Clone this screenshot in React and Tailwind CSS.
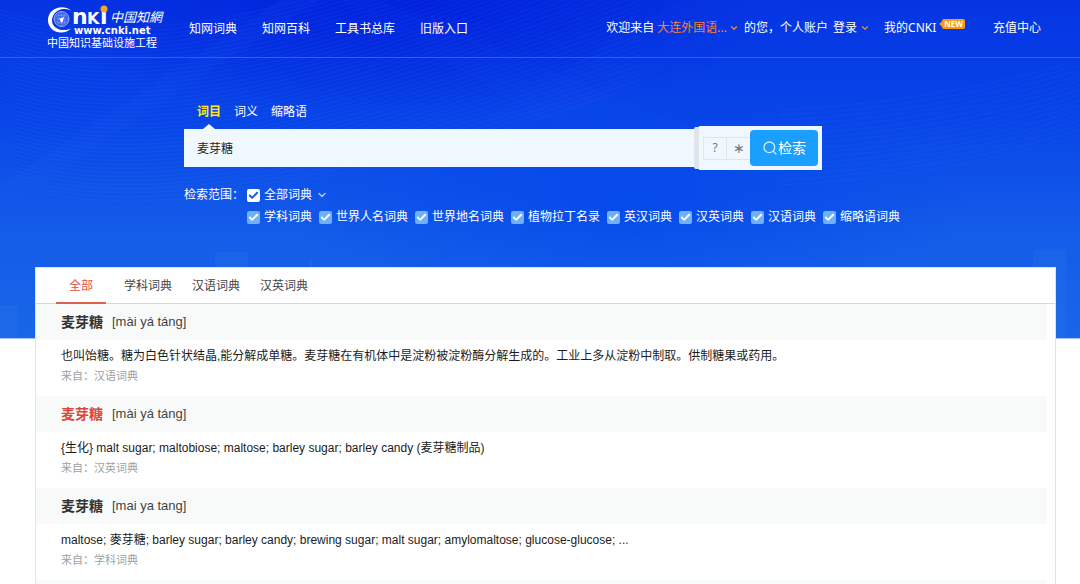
import { useState } from 'react';
import { Check, ChevronDown, Search } from 'lucide-react';

const NAV = ['知网词典', '知网百科', '工具书总库', '旧版入口'];

const SEARCH_TABS = ['词目', '词义', '缩略语'];

const DICTS = [
  '学科词典',
  '世界人名词典',
  '世界地名词典',
  '植物拉丁名录',
  '英汉词典',
  '汉英词典',
  '汉语词典',
  '缩略语词典',
];

const RESULT_TABS = ['学科词典', '汉语词典', '汉英词典'];

const ENTRIES = [
  {
    id: 1,
    word: '麦芽糖',
    pinyin: '[mài yá táng]',
    text: '也叫饴糖。糖为白色针状结晶,能分解成单糖。麦芽糖在有机体中是淀粉被淀粉酶分解生成的。工业上多从淀粉中制取。供制糖果或药用。',
    source: '汉语词典',
  },
  {
    id: 2,
    word: '麦芽糖',
    pinyin: '[mài yá táng]',
    text: '{生化} malt sugar; maltobiose; maltose; barley sugar; barley candy (麦芽糖制品)',
    source: '汉英词典',
    active: true,
  },
  {
    id: 3,
    word: '麦芽糖',
    pinyin: '[mai ya tang]',
    text: 'maltose; 麥芽糖; barley sugar; barley candy; brewing sugar; malt sugar; amylomaltose; glucose-glucose; ...',
    source: '学科词典',
  },
];

const WAVES = Array.from({ length: 44 }, (_, i) => i);

function Logo() {
  return (
    <svg width="120" height="48" viewBox="0 0 120 48" role="img" aria-label="CNKI 中国知网">
      {/* Globe inside the C */}
      <path
        d="M25 5.500C18-.5 6.500 2 3 10c-3.500 8 2 17.500 12 17.500 4 0 7.500-1.500 10-4-8 3.500-16 1-18.500-5C4 11 11 3 19 4c2.500.2 4 .8 6 1.500z"
        fill="#fff"
      />
      <circle cx="15.500" cy="14" r="7.500" fill="#2f58e6" stroke="#a9bdfa" strokeWidth=".8" />
      <g fill="none" stroke="#8fa8f8" strokeWidth=".5">
        <ellipse cx="15.500" cy="14" rx="3.500" ry="7.500" />
        <ellipse cx="15.500" cy="14" rx="7.500" ry="3.500" />
        <path d="M9.500 10h12M9.500 18h12M15.500 6.500v15M8 14h15" />
      </g>
      <path d="M13 12.500l2 1 3-2-1 5-2 1z" fill="#fff" />
      <g fill="#fff" fontFamily="DejaVu Sans, sans-serif" fontWeight="700">
        <text x="26" y="19" fontSize="22">n</text>
        <text x="41" y="19" fontSize="16">K</text>
        <text x="54" y="19" fontSize="22">i</text>
        <text x="28" y="29" fontSize="10">www.cnki.net</text>
      </g>
      <circle cx="58" cy="4" r="3.500" fill="#f5a623" />
      <g fill="#fff" fontFamily="Noto Sans CJK SC, sans-serif">
        <text x="64" y="17" fontSize="13" fontStyle="italic">中国知網</text>
        <text x="1" y="42" fontSize="11">中国知识基础设施工程</text>
      </g>
    </svg>
  );
}

function HeroBackdrop() {
  return (
    <svg
      className="absolute inset-0 h-full w-full"
      viewBox="0 0 1080 338"
      preserveAspectRatio="none"
      aria-hidden="true"
    >
      <defs>
        <linearGradient id="sky" x1="0" y1="0" x2="0" y2="1">
          <stop offset="0" stopColor="#0534e2" />
          <stop offset=".35" stopColor="#0845e8" />
          <stop offset=".7" stopColor="#145de8" />
          <stop offset="1" stopColor="#1866e8" />
        </linearGradient>
        <radialGradient id="deep" cx=".58" cy=".6" r=".32">
          <stop offset="0" stopColor="#0045ec" stopOpacity=".7" />
          <stop offset="1" stopColor="#0045ec" stopOpacity="0" />
        </radialGradient>
        <radialGradient id="dusk" cx=".38" cy="0" r=".35">
          <stop offset="0" stopColor="#001fdc" stopOpacity=".9" />
          <stop offset="1" stopColor="#001fdc" stopOpacity="0" />
        </radialGradient>
      </defs>
      <rect width="1080" height="338" fill="url(#sky)" />
      <rect width="1080" height="338" fill="url(#deep)" />
      <rect width="1080" height="338" fill="url(#dusk)" />
      <g fill="none" stroke="#3c7bff" strokeOpacity=".11">
        {WAVES.map(i => (
          <path key={i} d={`M0 ${i * 4 + 10}C120 ${i * 4 + 50} 300 ${i * 4 + 30} 640 ${i * 5 - 130}`} />
        ))}
        {WAVES.slice(0, 16).map(i => (
          <path key={i} d={`M780 ${110 + i * 5}C880 ${105 + i * 5} 980 ${90 + i * 5} 1080 ${60 + i * 5}`} />
        ))}
      </g>
      <path d="M0 185L280 0h40L120 130 0 215z" fill="#2a6bff" fillOpacity=".07" />
      <path d="M380 0L700 130H560L340 0z" fill="#2a6bff" fillOpacity=".05" />
      <path d="M480 120L680 0h120L560 120z" fill="#2a6bff" fillOpacity=".05" />
      {/* Skyline */}
      <g fill="#3f8cf0" fillOpacity=".12">
        <path d="M0 305h18v33H0zM215 252h33v30h-33zM310 260h2v22h-2zM1033 250h33v88h-33z" />
      </g>
    </svg>
  );
}

function CheckItem({ label, primary, checked, onChange }) {
  return (
    <label className="flex items-center gap-1 whitespace-nowrap">
      <span className="relative flex">
        <input
          type="checkbox"
          checked={checked}
          onChange={onChange}
          className={`h-[13px] w-[13px] appearance-none rounded-xs ${primary ? 'bg-white' : 'bg-[#6fb0fb]'}`}
        />
        {checked && (
          <Check
            size={11}
            strokeWidth={4}
            className={`pointer-events-none absolute top-px left-px ${primary ? 'text-[#1c55e0]' : 'text-white'}`}
          />
        )}
      </span>
      {label}
    </label>
  );
}

function Entry({ entry }) {
  return (
    <article>
      <div className="mr-2 flex h-9 items-center gap-[9px] bg-[#f8faf9] pl-[25px]">
        <h2 className={`text-sm font-bold ${entry.active ? 'text-[#d9483b]' : 'text-[#333]'}`}>{entry.word}</h2>
        <span className="text-[13px] text-[#444]">{entry.pinyin}</span>
      </div>
      <div className="pt-[6px] pr-8 pb-[10px] pl-[25px]">
        <p className="text-xs leading-5 text-[#1c1c1c]">{entry.text}</p>
        <p className="text-[11px] leading-5 text-[#a0a0a0]">来自：{entry.source}</p>
      </div>
    </article>
  );
}

export default function App() {
  const [query, setQuery]         = useState('麦芽糖');
  const [searchTab, setSearchTab] = useState('词目');
  const [selected, setSelected]   = useState(DICTS);

  const allSelected = selected.length === DICTS.length;

  function toggle(name) {
    setSelected(list => (list.includes(name) ? list.filter(n => n !== name) : [...list, name]));
  }

  return (
    <div className="flex min-h-screen flex-col bg-white font-['Liberation_Sans','Noto_Sans_CJK_SC',sans-serif] text-xs">
      <div className="relative border-b border-[#a9c4f5] pb-[110px] font-['Noto_Sans','Noto_Sans_CJK_SC',sans-serif] text-white">
        <HeroBackdrop />

        {/* Header */}
        <header className="relative flex h-[58px] items-center justify-between border-b border-[#2f62f2] pr-[39px] pl-[46px] whitespace-nowrap">
          <div className="flex items-center gap-[23px]">
            <a href="#home">
              <Logo />
            </a>
            <nav className="flex gap-[25px]">
              {NAV.map(item => (
                <a key={item} href={`#${item}`}>{item}</a>
              ))}
            </nav>
          </div>
          <div className="flex items-center pb-0.5">
            <span>欢迎来自</span>
            <button className="ml-[3px] flex items-center gap-0.5 text-[#f5823c]">
              大连外国语...
              <ChevronDown size={10} strokeWidth={3} />
            </button>
            <span className="ml-[5px]">的您，个人账户</span>
            <button className="ml-[5px] flex items-center gap-[3px]">
              登录
              <ChevronDown size={10} strokeWidth={3} className="text-[#f5823c]" />
            </button>
            <a href="#my" className="ml-[14px] flex items-center gap-[6px]">
              我的CNKI
              <span className="relative mb-2 rounded-xs bg-[#fb9a14] px-0.5 text-[8px] leading-[10px] font-bold">
                <span className="absolute top-[3px] -left-0.5 h-1 w-1 rotate-45 bg-[#fb9a14]" />
                <span className="relative">NEW</span>
              </span>
            </a>
            <a href="#recharge" className="ml-7">充值中心</a>
          </div>
        </header>

        {/* Search */}
        <div className="relative pt-11 pl-[184px]">
          <div className="flex h-[27px] gap-[13px] pl-[13px]">
            {SEARCH_TABS.map(tab => (
              <button
                key={tab}
                onClick={() => setSearchTab(tab)}
                className={`relative h-full pb-2 ${tab === searchTab ? 'font-bold text-[#ffe81a]' : ''}`}
              >
                {tab}
                {tab === searchTab && (
                  <span className="absolute bottom-0 left-1/2 -ml-[6px] border-x-6 border-b-5 border-x-transparent border-b-[#f0f8ff]" />
                )}
              </button>
            ))}
          </div>
          <form className="-mt-[3px] flex items-center" onSubmit={e => e.preventDefault()}>
            <input
              type="text"
              aria-label="检索词"
              value={query}
              onChange={e => setQuery(e.target.value)}
              className="h-[38px] w-[47.2%] max-w-[640px] min-w-[510px] bg-[#f0f8ff] px-[13px] text-[#222] outline-none"
            />
            <div className="h-[42px] w-[5px] rounded-l-xs bg-[#e0e5e9]" />
            <div className="flex h-11 items-center bg-[#f0f8ff] px-1 text-[#777]">
              <button type="button" className="h-[23px] w-6 border border-[#e2e6ea]">?</button>
              <button type="button" className="h-[23px] w-[23px] border-y border-[#e2e6ea] text-sm leading-5">∗</button>
              <button
                type="submit"
                className="flex h-9 w-[68px] items-center justify-center rounded-sm bg-[#1a9fff] text-sm text-white"
              >
                <Search size={16} strokeWidth={2} className="opacity-80" />
                检索
              </button>
            </div>
          </form>

          {/* Scope */}
          <div className="flex pt-3.5 leading-[22px]">
            <span className="w-[63px]">检索范围：</span>
            <div>
              <div className="flex items-center gap-1">
                <CheckItem
                  label="全部词典"
                  primary
                  checked={allSelected}
                  onChange={() => setSelected(allSelected ? [] : DICTS)}
                />
                <ChevronDown size={12} strokeWidth={3} className="text-[#a9c8ff]" />
              </div>
              <div className="flex flex-wrap gap-x-[7px]">
                {DICTS.map(name => (
                  <CheckItem key={name} label={name} checked={selected.includes(name)} onChange={() => toggle(name)} />
                ))}
              </div>
            </div>
          </div>
        </div>
      </div>

      {/* Results */}
      <main className="relative mt-[-72px] mr-6 ml-[35px] flex flex-1 flex-col border-x border-t border-[#dfe5ee] bg-white">
        <nav className="flex h-9 border-b border-[#d8d8d8] pl-5 leading-9 text-[#444]">
          <a href="#all" className="mr-[18px] h-9 border-b-2 border-[#e0604f] px-[13px] text-[#e0503f]">全部</a>
          <div className="flex gap-5">
            {RESULT_TABS.map(tab => (
              <a key={tab} href={`#${tab}`}>{tab}</a>
            ))}
          </div>
        </nav>
        {ENTRIES.map(entry => (
          <Entry key={entry.id} entry={entry} />
        ))}
        <div className="mr-2 flex-1 bg-[#f8faf9]" />
      </main>
    </div>
  );
}
